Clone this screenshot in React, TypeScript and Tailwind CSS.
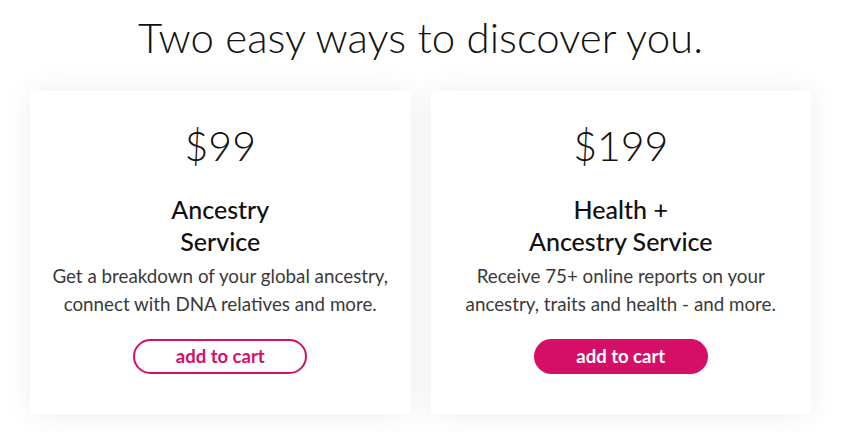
export default function App() {
  const plans = [
    {
      price: "$99",
      title: ["Ancestry", "Service"],
      desc: ["Get a breakdown of your global ancestry,", "connect with DNA relatives and more."],
      filled: false,
    },
    {
      price: "$199",
      title: ["Health +", "Ancestry Service"],
      desc: ["Receive 75+ online reports on your", "ancestry, traits and health - and more."],
      filled: true,
    },
  ];

  return (
    <main className="min-h-screen bg-white text-black" style={{ fontFamily: "Lato, 'Open Sans', sans-serif" }}>
      <h1 className="pt-[12px] text-center text-[42px] leading-[50px] font-light text-[#111]">
        Two easy ways to discover you.
      </h1>
      <section className="grid grid-cols-2 gap-5 px-[30px] pt-[29px]">
        {plans.map((p) => (
          <div
            key={p.price}
            className="flex flex-col items-center bg-white rounded-[3px] shadow-[0_0_30px_rgba(0,0,0,0.07)] pt-[31px] pb-[40px] text-center"
          >
            <p className="text-[41px] leading-[48px] font-light text-[#111]">{p.price}</p>
            <h2 className="mt-[23px] text-[25px] leading-[32px] font-medium text-[#111]">
              {p.title[0]}
              <br />
              {p.title[1]}
            </h2>
            <p className="mt-[5px] text-[18.8px] leading-[28px] text-[#3a3a3a]">
              {p.desc[0]}
              <br />
              {p.desc[1]}
            </p>
            <button
              className={
                p.filled
                  ? "mt-[21px] w-[174px] h-[35px] rounded-full bg-[#d50f67] text-white text-[18.5px] font-bold"
                  : "mt-[21px] w-[174px] h-[35px] rounded-full border-2 border-[#d50f67] text-[#d50f67] text-[18.5px] font-bold"
              }
            >
              add to cart
            </button>
          </div>
        ))}
      </section>
    </main>
  );
}
